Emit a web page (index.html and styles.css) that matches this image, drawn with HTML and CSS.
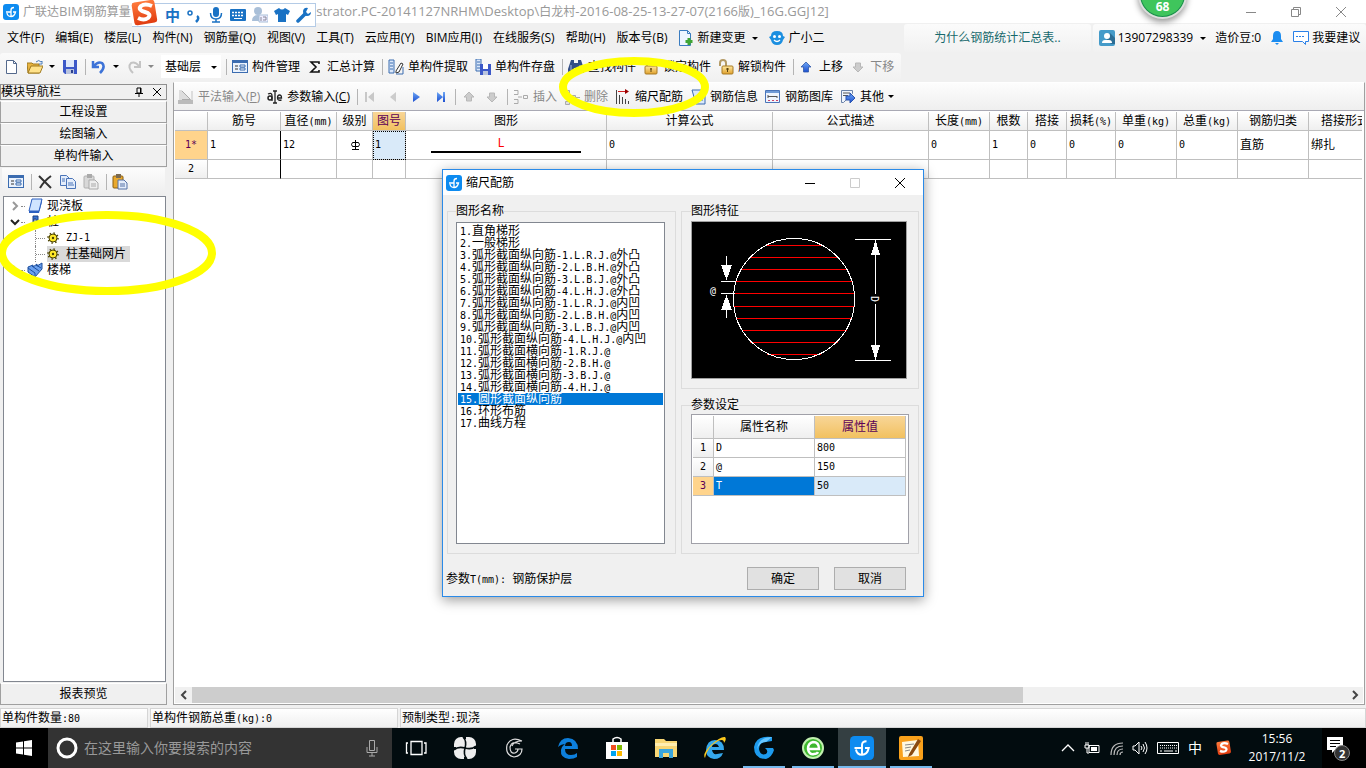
FILE: index.html
```html
<!DOCTYPE html>
<html lang="zh-CN">
<head>
<meta charset="utf-8">
<title>广联达BIM钢筋算量</title>
<link rel="stylesheet" href="styles.css">
</head>
<body>
<svg class="defs" width="0" height="0" aria-hidden="true">
  <defs>
    <linearGradient id="gb" x1="0" y1="0" x2="0" y2="1"><stop offset="0" stop-color="#6fa8f5"/><stop offset="1" stop-color="#1c4fd0"/></linearGradient>
    <linearGradient id="gy" x1="0" y1="0" x2="0" y2="1"><stop offset="0" stop-color="#ffe9a0"/><stop offset="1" stop-color="#e0a02c"/></linearGradient>
    <linearGradient id="gr" x1="0" y1="0" x2="0" y2="1"><stop offset="0" stop-color="#ff7a3c"/><stop offset="1" stop-color="#e03c10"/></linearGradient>
    <symbol id="app" viewBox="0 0 16 16"><rect width="16" height="16" rx="3" fill="#0d8bf0"/><path d="M8 12V6q0-2.500 3-2.500M3 8h5M4 9q.5 3.500 4 3.500t4.500-4.500H10" fill="none" stroke="#fff" stroke-width="1.300"/></symbol>
    <symbol id="sogou" viewBox="0 0 28 28"><rect x="2" y="2" width="23" height="23" rx="3" fill="url(#gr)" transform="rotate(-9 14 14)"/><path d="M21 7q-7-3-11 0c-3 3 0 5 4 6s6 3 3 6q-4 3-10 0" fill="none" stroke="#fff" stroke-width="4"/></symbol>
    <symbol id="form" viewBox="0 0 16 16"><rect x=".5" y="1.500" width="15" height="12" fill="#eaf2fd" stroke="#3b6cb0"/><path d="M1 3h14" stroke="#3b6cb0" stroke-width="2"/><path d="M3 7h3M3 10h3" stroke="#333"/><path d="M8 6h5v2H8zM8 9h5v2H8z" fill="#fff" stroke="#3b6cb0"/></symbol>
    <symbol id="floppy" viewBox="0 0 16 16"><path d="M1 1h14v14H3l-2-2z" fill="#3c58c8"/><path d="M4 1h8v7H4z" fill="#dfe8fa"/><path d="M4 10h8v5H4z" fill="#b9c4de"/><path d="M9 11h2v3H9z" fill="#2c3f8c"/></symbol>
    <symbol id="paste" viewBox="0 0 16 16"><rect x="1" y="2" width="10" height="12" rx="1" fill="#e9a92e" stroke="#8b5f10"/><rect x="4" y="0" width="5" height="4" fill="#7a6a50"/><path d="M6 6h6l3 3v6H6z" fill="#e4edfb" stroke="#5571a5"/><path d="M8 10h5M8 12h5" stroke="#5571a5"/></symbol>
    <symbol id="pasteg" viewBox="0 0 16 16"><rect x="1" y="2" width="10" height="12" rx="1" fill="#d8d8d8" stroke="#b0b0b0"/><rect x="4" y="0" width="5" height="4" fill="#aaa"/><path d="M6 6h6l3 3v6H6z" fill="#eee" stroke="#aaa"/><path d="M8 10h5M8 12h5" stroke="#aaa"/></symbol>
    <symbol id="lock" viewBox="0 0 16 16"><path d="M4 8V5q0-3 4-3t4 3v3" fill="none" stroke="#9a8f7a" stroke-width="2"/><rect x="2" y="7" width="12" height="8" rx="1" fill="url(#gy)" stroke="#a87b25"/><path d="M8 9v4M7 10h2" stroke="#5b430f"/></symbol>
    <symbol id="unlock" viewBox="0 0 16 16"><path d="M2 7V4q0-3 3-3t3 3v3" fill="none" stroke="#b49b66" stroke-width="2"/><rect x="4" y="7" width="11" height="8" rx="1" fill="url(#gy)" stroke="#a87b25"/><path d="M9.500 9v4M8 10h3" stroke="#5b430f"/></symbol>
    <symbol id="up" viewBox="0 0 16 16"><path d="M7 3l5 5H9.500v5h-5V8H2z" fill="url(#gb)" stroke="#3058a8" stroke-width=".8"/></symbol>
    <symbol id="upg" viewBox="0 0 16 16"><path d="M8 3l5 5h-2.500v4h-5V8H3z" fill="#ccc" stroke="#b8b8b8"/></symbol>
    <symbol id="downg" viewBox="0 0 16 16"><path d="M8 13l5-5h-2.500V4h-5v4H3z" fill="#ccc" stroke="#b8b8b8"/></symbol>
    <symbol id="gear" viewBox="0 0 12 12"><circle cx="6" cy="6" r="4" fill="#ffe92a" stroke="#4a4200"/><circle cx="6" cy="6" r="5" fill="none" stroke="#4a4200" stroke-width="1.500" stroke-dasharray="1.500 2.400"/><circle cx="6" cy="6" r="1.200" fill="#4a4200"/></symbol>
  </defs>
</svg>

<header class="titlebar">
  <svg class="i16"><use href="#app"/></svg>
  <span class="t1">广联达<span class="lat">BIM</span>钢筋算量</span>
  <span class="t2"><span class="lat">istrator.PC-20141127NRHM\Desktop\</span>白龙村<span class="lat">-2016-08-25-13-27-07(2166</span>版<span class="lat">)_16G.GGJ12]</span></span>
  <div class="wincontrols">
    <button aria-label="最小化"><svg viewBox="0 0 12 12"><path d="M1 6.500h10"/></svg></button>
    <button aria-label="还原"><svg viewBox="0 0 12 12"><path d="M1.500 3.500h7v7h-7zM3.500 3V1.500h7v7H9"/></svg></button>
    <button aria-label="关闭"><svg viewBox="0 0 12 12"><path d="M1 1l10 10M11 1L1 11"/></svg></button>
  </div>
</header>

<nav class="menubar">
  <button>文件(F)</button><button>编辑(E)</button><button>楼层(L)</button><button>构件(N)</button><button>钢筋量(Q)</button><button>视图(V)</button><button>工具(T)</button><button>云应用(Y)</button><button>BIM应用(I)</button><button>在线服务(S)</button><button>帮助(H)</button><button>版本号(B)</button>
  <button class="ic"><svg class="i16" viewBox="0 0 16 16"><path d="M1.500.500h8l3 3v12h-11z" fill="#eef6ff" stroke="#3a7cc0"/><path d="M9.500.500v3h3" fill="none" stroke="#3a7cc0"/><path d="M11 8v7M7.500 11.500h7" stroke="#3fa535" stroke-width="3"/></svg>新建变更<i class="caret"></i></button>
  <button class="ic"><svg class="i16" viewBox="0 0 16 16"><path d="M8 1q6 0 6 5l2 1-2 3q-1 5-6 5t-6-5L0 7l2-1q0-5 6-5z" fill="#1c8fe0"/><circle cx="5.500" cy="6.500" r="1.500" fill="#fff"/><circle cx="10.500" cy="6.500" r="1.500" fill="#fff"/><path d="M5 10q3 3 6 0" fill="none" stroke="#fff" stroke-width="1.300"/></svg>广小二</button>
  <div class="tip"><a href="#">为什么钢筋统计汇总表..</a></div>
  <div class="user">
    <button class="ic"><svg class="i16" viewBox="0 0 16 16"><rect width="16" height="16" rx="2" fill="#459bc9"/><path d="M8 10l4 4h4V8l-5-5z" fill="#2c6e96"/><circle cx="8" cy="6" r="3" fill="#fff"/><path d="M3 13q0-3 3-3h4q3 0 3 3z" fill="#fff"/></svg>13907298339<i class="caret"></i></button>
    <span>造价豆:0</span>
    <button class="ic" aria-label="通知"><svg class="i14" viewBox="0 0 14 16"><path d="M7 1q4 0 4 5v3l2 3H1l2-3V6q0-5 4-5z" fill="#1b8cf0"/><path d="M5 13h4l-2 2z" fill="#1b8cf0"/></svg></button>
    <button class="ic"><svg class="i16" viewBox="0 0 16 16"><path d="M.500 1.500h15v10h-3v3l-3-3h-9z" fill="#fff" stroke="#2a80e8"/><path d="M3 6.500h2m1 0h2m1 0h2" stroke="#2a80e8"/></svg>我要建议</button>
  </div>
</nav>

<div class="toolbar">
  <div class="strip">
    <button class="tb" aria-label="新建"><svg class="i16" viewBox="0 0 16 16"><path d="M2.500 1.500h7l3 3v10h-10z" fill="#fff" stroke="#54698c"/><path d="M9.500 1.500v3h3" fill="none" stroke="#54698c"/></svg></button>
    <button class="tb" aria-label="打开"><svg class="i16" viewBox="0 0 16 16"><path d="M0 4h5l1 1h6v9H1z" fill="#e8b440" stroke="#a07a20"/><path d="M1 14l3-7h12l-3 7z" fill="#ffe28a" stroke="#a07a20"/><path d="M9 3q3-3 5 0l1-1v3h-3" fill="none" stroke="#4a7cba"/></svg><i class="caret"></i></button>
    <button class="tb" aria-label="保存"><svg class="i16"><use href="#floppy"/></svg></button>
    <i class="sep"></i>
    <button class="tb" aria-label="撤销"><svg class="i16" viewBox="0 0 16 16"><path d="M2 2v6h6M3 7q4-5 8-3 4 4-2 10" fill="none" stroke="#3d73d8" stroke-width="2.500"/></svg><i class="caret"></i></button>
    <button class="tb off" aria-label="重做"><svg class="i16" viewBox="0 0 16 16"><path d="M14 2v6H8M13 7Q9 2 5 4q-4 4 2 10" fill="none" stroke="#c4c4c4" stroke-width="2"/></svg><i class="caret"></i></button>
    <div class="picker"><select class="floor" aria-label="楼层"><option>基础层</option></select><i class="caret"></i></div>
    <i class="sep"></i>
    <button class="tb"><svg class="i16"><use href="#form"/></svg>构件管理</button>
    <button class="tb"><svg class="i16" viewBox="0 0 16 16"><path d="M12 5V3H4l5 5-5 5h8v-2" fill="none" stroke="#111" stroke-width="1.600"/></svg>汇总计算</button>
    <i class="sep"></i>
    <button class="tb"><svg class="i16" viewBox="0 0 16 16"><path d="M1 1h5v13H1z" fill="#dbe8fa" stroke="#3b6cb0"/><path d="M2 4h3M2 7h3M2 10h3" stroke="#3b6cb0"/><path d="M8 12l5-8 2 1-4 8-3 1z" fill="#fff" stroke="#333"/><path d="M8 15h7V8" fill="none" stroke="#3b6cb0"/></svg>单构件提取</button>
    <button class="tb"><svg class="i16" viewBox="0 0 16 16"><path d="M1 0h5v12H1z" fill="#dbe8fa" stroke="#3b6cb0"/><path d="M2 3h3M2 6h3M2 9h3" stroke="#3b6cb0"/><path d="M5 5h11v11H5z" fill="#3c58c8"/><path d="M8 5h5v5H8z" fill="#fff"/><path d="M8 12h5v4H8z" fill="#b9c4de"/></svg>单构件存盘</button>
    <i class="sep"></i>
    <button class="tb"><svg class="i16" viewBox="0 0 16 16"><path d="M3 1h3v3h4V1h3l3 9v4h-6v-5H6v5H0v-4z" fill="#344f86"/><path d="M3 6v5M12 6v5" stroke="#a5bce8"/></svg>查找构件</button>
    <button class="tb"><svg class="i16"><use href="#lock"/></svg>锁定构件</button>
    <button class="tb"><svg class="i16"><use href="#unlock"/></svg>解锁构件</button>
    <i class="sep"></i>
    <button class="tb"><svg class="i16"><use href="#up"/></svg>上移</button>
    <button class="tb off"><svg class="i16"><use href="#downg"/></svg>下移</button>
  </div>
</div>

<div class="work">
  <aside class="side">
    <div class="sidehead"><span>模块导航栏</span>
      <button aria-label="固定"><svg viewBox="0 0 10 10"><path d="M3 1h4v5H3zM1 6.500h8M5 6v4M6.500 1v5" fill="none" stroke="#000"/></svg></button>
      <button aria-label="关闭"><svg viewBox="0 0 10 10"><path d="M1 1l8 8M9 1L1 9" stroke="#000"/></svg></button>
    </div>
    <button class="navbtn">工程设置</button>
    <button class="navbtn">绘图输入</button>
    <button class="navbtn">单构件输入</button>
    <div class="sidetools">
      <button class="tb" aria-label="属性"><svg class="i16"><use href="#form"/></svg></button><i class="sep"></i>
      <button class="tb" aria-label="删除"><svg class="i16" viewBox="0 0 16 16"><path d="M2 2q6 6 12 12M14 2Q7 7 3 14" fill="none" stroke="#333" stroke-width="2"/></svg></button>
      <button class="tb" aria-label="复制"><svg class="i16" viewBox="0 0 16 16"><path d="M.500 1.500h6l3 3v7h-9z" fill="#e4edfb" stroke="#4a74b8"/><path d="M6.500 4.500h6l3 3v7h-9z" fill="#e4edfb" stroke="#4a74b8"/><path d="M8 9h5M8 11h6M2 5h3M2 7h3" stroke="#4a74b8"/></svg></button>
      <button class="tb" aria-label="粘贴"><svg class="i16"><use href="#pasteg"/></svg></button><i class="sep"></i>
      <button class="tb" aria-label="粘贴构件"><svg class="i16"><use href="#paste"/></svg></button>
    </div>
    <ul class="tree">
      <li><svg class="exp" viewBox="0 0 10 10"><path d="M3 1l4 4-4 4" stroke="#999"/></svg><i class="dot"></i><svg class="i16" viewBox="0 0 16 16"><path d="M5 1h10l-3 12H2z" fill="#cfe4ff" stroke="#2b5fc0"/><path d="M2 13h10v2H2zM12 13l3-12v3l-3 11z" fill="#2b5fc0"/></svg><span>现浇板</span></li>
      <li><svg class="exp" viewBox="0 0 10 10"><path d="M1 3l4 4 4-4" stroke="#222"/></svg><i class="dot"></i><svg class="i16" viewBox="0 0 16 16"><path d="M6 2h5v9H9V5H7v9H3v-3h3z" fill="#3673d0" stroke="#1d3f80"/></svg><span>桩</span>
        <ul>
          <li><i class="branch"></i><b class="leaf"><svg class="i12"><use href="#gear"/></svg><span class="m">ZJ-1</span></b></li>
          <li><i class="branch"></i><b class="leaf sel"><svg class="i12"><use href="#gear"/></svg><span>柱基础网片</span></b></li>
        </ul>
      </li>
      <li><svg class="exp" viewBox="0 0 10 10"><path d="M3 1l4 4-4 4" stroke="#999"/></svg><i class="dot"></i><svg class="i16" viewBox="0 0 16 16"><path d="M1 5l5-2v2l4-3v2l5-3v6L8 15 1 10z" fill="#6aa0ee" stroke="#1d4f9e"/><path d="M1 6l7 5M5 4l7 5M9 3l5 3M8 11v4" stroke="#1d4f9e"/></svg><span>楼梯</span></li>
    </ul>
    <button class="navbtn">报表预览</button>
  </aside>

  <main class="main">
    <div class="maintools">
      <button class="tb off"><svg class="i16" viewBox="0 0 16 16"><path d="M3.500 1.500l9 9h-9z" fill="#ddd" stroke="#aaa"/><path d="M1 1h3v11H1zM13 2h2v10h-2z" fill="#ddd"/><path d="M0 11h15v4H0z" fill="#bbb"/></svg><span>平法输入(<u>P</u>)</span></button>
      <button class="tb"><svg class="i16" viewBox="0 0 16 16"><circle cx="3" cy="9" r="2" fill="none" stroke="#222" stroke-width="1.500"/><path d="M1 5q4-2 4 2v5M10.500 9h4q0-3-2-3t-2 3 4 2M6 2h4M6 14h4M8 2v12" fill="none" stroke="#222" stroke-width="1.300"/></svg><span>参数输入(<u>C</u>)</span></button>
      <i class="sep"></i>
      <button class="tb" aria-label="首条"><svg class="i16" viewBox="0 0 16 16"><path d="M2 3h2v10H2zM11 3v10L5 8z" fill="#c8c8c8"/></svg></button>
      <button class="tb" aria-label="上一条"><svg class="i16" viewBox="0 0 16 16"><path d="M10 3v10L4 8z" fill="#ccc"/></svg></button>
      <button class="tb" aria-label="下一条"><svg class="i16" viewBox="0 0 16 16"><path d="M4 3v10l7-5z" fill="url(#gb)"/></svg></button>
      <button class="tb" aria-label="末条"><svg class="i16" viewBox="0 0 16 16"><path d="M5 3v10l6-5zM11 3h2v10h-2z" fill="url(#gb)"/></svg></button>
      <i class="sep"></i>
      <button class="tb" aria-label="上移"><svg class="i16"><use href="#upg"/></svg></button>
      <button class="tb" aria-label="下移"><svg class="i16"><use href="#downg"/></svg></button>
      <i class="sep"></i>
      <button class="tb off"><svg class="i16" viewBox="0 0 16 16"><path d="M1 1.500h4v4H1M1 10.500h4v4H1M5 8h4M10.500 6.500h4v3h-4z" fill="none" stroke="#aaa"/></svg>插入</button>
      <button class="tb off"><svg class="i16" viewBox="0 0 16 16"><path d="M1.500 1.500h4v3h-4zM5.500 6.500h6v4h-6zM1.500 12.500h4v3h-4zM12 8.500h4" fill="#ddd" stroke="#aaa"/></svg>删除</button>
      <button class="tb"><svg class="i16" viewBox="0 0 16 16"><path d="M1.500 1v14M4.500 6v9M7.500 8v7M10.500 10v5M13.500 12v3" stroke="#444"/><path d="M3 2.500h8" stroke="#d02020"/><path d="M10 0l4 2.500L10 5z" fill="#900"/></svg>缩尺配筋</button>
      <button class="tb"><svg class="i16" viewBox="0 0 16 16"><path d="M2 1h10l3 4v10H6z" fill="#dbe8fa" stroke="#3b6cb0"/><path d="M7 8h6M7 11h6" stroke="#3b6cb0"/></svg>钢筋信息</button>
      <button class="tb"><svg class="i16" viewBox="0 0 16 16"><path d="M.500 1.500h14v12H.500z" fill="#eef4fd" stroke="#4a74b8"/><path d="M1 3h13" stroke="#6f9ad6" stroke-width="2"/><path d="M3 6v3M3 7.500h9M12 7v2" fill="none" stroke="#555"/><path d="M3 11.500h2m2 0h2m2 0h2" stroke="#c46"/></svg>钢筋图库</button>
      <button class="tb"><svg class="i16" viewBox="0 0 16 16"><path d="M1.500 1.500h11v3l-9 9h-2z" fill="#eef4fd" stroke="#6a82a8"/><path d="M3 4h7M3 6.500h5" stroke="#555"/><path d="M6 7h4V4l5 5-5 5v-3H6z" fill="url(#gb)" stroke="#2b55b0"/></svg>其他<i class="caret"></i></button>
    </div>
    <div class="gridwrap">
      <table class="grid">
        <colgroup><col class="c33"><col class="c73"><col class="c56"><col class="c36"><col class="c33"><col class="c201"><col class="c166"><col class="c156"><col class="c61"><col class="c38"><col class="c39"><col class="c49"><col class="c61"><col class="c61"><col class="c71"><col class="c73"></colgroup>
        <thead><tr><th></th><th>筋号</th><th>直径<span class="m">(mm)</span></th><th>级别</th><th class="hot">图号</th><th>图形</th><th>计算公式</th><th>公式描述</th><th>长度<span class="m">(mm)</span></th><th>根数</th><th>搭接</th><th>损耗<span class="m">(%)</span></th><th>单重<span class="m">(kg)</span></th><th>总重<span class="m">(kg)</span></th><th>钢筋归类</th><th>搭接形式</th></tr></thead>
        <tbody>
          <tr class="r1"><th class="cur m">1*</th><td class="m frozen">1</td><td class="m">12</td><td class="mid"><svg class="i12" viewBox="0 0 12 12"><path d="M6.500 1v10M3 10.500h7M3.500 3.500h6l1 2-1 2h-6l-1-2z" fill="none" stroke="#000"/></svg></td><td class="m focus">1</td><td class="shape"><span>L</span></td><td class="m">0</td><td></td><td class="m">0</td><td class="m">1</td><td class="m">0</td><td class="m">0</td><td class="m">0</td><td class="m">0</td><td>直筋</td><td>绑扎</td></tr>
          <tr class="r2"><th class="m">2</th><td class="frozen"></td><td></td><td></td><td></td><td></td><td></td><td></td><td></td><td></td><td></td><td></td><td></td><td></td><td></td><td></td></tr>
        </tbody>
      </table>
    </div>
    <div class="hscroll">
      <button aria-label="向左"><svg viewBox="0 0 10 10"><path d="M7 1L3 5l4 4"/></svg></button>
      <div class="track"><div class="thumb"></div></div>
      <button aria-label="向右"><svg viewBox="0 0 10 10"><path d="M3 1l4 4-4 4"/></svg></button>
    </div>
  </main>
</div>

<footer class="status">
  <div class="s1">单构件数量<span class="m">:80</span></div>
  <div class="s2">单构件钢筋总重<span class="m">(kg):0</span></div>
  <div class="s3">预制类型<span class="m">:</span>现浇</div>
</footer>

<div class="taskbar">
  <button class="start" aria-label="开始"><svg viewBox="0 0 16 16"><path d="M0 2.500l7-1v6H0zM8 1.300L16 0v7.500H8zM0 8.500h7v6l-7-1zM8 8.500h8V16l-8-1.300z" fill="#fff"/></svg></button>
  <label class="search"><svg class="ring" viewBox="0 0 22 22"><circle cx="11" cy="11" r="9" fill="none" stroke="#fff" stroke-width="3"/></svg><input type="text" placeholder="在这里输入你要搜索的内容" aria-label="搜索"><svg class="mic" viewBox="0 0 12 18"><path d="M3.500 1.500h5v10h-5zM1 8v5.500h10V8M6 14v3M3 17h6" fill="none" stroke="#aaa"/></svg></label>
  <div class="apps">
    <button aria-label="任务视图"><svg viewBox="0 0 24 24"><path d="M7 5.500h11v13H7zM4 7H2.500v10H4M20 7h2v10h-2" fill="none" stroke="#fff" stroke-width="1.300"/></svg></button>
    <button aria-label="风扇"><svg viewBox="0 0 24 24"><rect x="1" y="1" width="22" height="22" rx="7" fill="#eee"/><path d="M12 12Q14 5 10 1M12 12q7 2 11-2M12 12q-2 7 2 11M12 12Q5 10 1 14" fill="none" stroke="#020c0f" stroke-width="1.600"/><path d="M12 0v3M24 12h-3M12 24v-3M0 12h3" stroke="#020c0f" stroke-width="2"/></svg></button>
    <button aria-label="漩涡"><svg viewBox="0 0 24 24"><path d="M20 5Q9 0 5 9q-2 10 7 12 8-1 8-8h-7M18 8Q10 4 8 11q0 7 5 6 3-1 3-4M20 5q-8 0-10 5" fill="none" stroke="#ddd" stroke-width="1.200"/></svg></button>
    <button class="edge" aria-label="Edge"><svg viewBox="0 0 24 24"><path d="M2 11Q4 2 12 2q10 1 10 11H9q0 6 6 6 4 0 6-2v4q-3 2-8 2Q4 22 5 14q1-5 5-6-5 0-8 3zm7-1h7q0-4-3-4-4 0-4 4z" fill="#0d7fdc"/></svg></button>
    <button aria-label="应用商店"><svg viewBox="0 0 24 24"><path d="M8 7V3q4-3 8 0v4" fill="none" stroke="#fff" stroke-width="1.500"/><path d="M1 6h22v17H1z" fill="#fff"/><path d="M6 9h5v5H6z" fill="#f25022"/><path d="M12 9h5v5h-5z" fill="#7fba00"/><path d="M6 15h5v5H6z" fill="#00a4ef"/><path d="M12 15h5v5h-5z" fill="#ffb900"/></svg></button>
    <button aria-label="文件资源管理器"><svg viewBox="0 0 24 24"><path d="M1 3h9l2 2h11v16H1z" fill="#f8d775"/><path d="M1 7h22v3H1z" fill="#ffeeb0"/><path d="M5 13h14v9h-4v-5H9v5H5z" fill="#3aa5dc"/></svg></button>
    <button aria-label="Internet Explorer"><svg viewBox="0 0 24 24"><path d="M12 4q9 0 9 10H9q1 5 5 4l6-1q-2 6-9 6-8-1-8-9 1-10 9-10zM9 11h7q-1-3-3-3-4 0-4 3z" fill="#35a8ec"/><path d="M2 22Q-1 18 8 9q10-9 14-8 2 2-1 6 0-5-6-2Q4 11 2 22z" fill="#fbc81c"/></svg></button>
    <button class="run" aria-label="浏览器"><svg viewBox="0 0 24 24"><path d="M20 1Q4-1 2 11q0 12 12 12 6-2 8-9l-1-2h-8q4 3 1 6-6 2-7-5 0-7 7-7l6-1z" fill="#1d9bee"/><path d="M20 1q-14 0-15 13Q7 6 14 6z" fill="#66c6ff"/></svg></button>
    <button class="run" aria-label="安全浏览器"><svg viewBox="0 0 24 24"><circle cx="12" cy="12" r="10" fill="#3eb82e" stroke="#c2f0b0" stroke-width="2"/><path d="M7 13h11q0-7-6-7-5 1-5 7 1 6 6 5 3 0 4-2" fill="none" stroke="#fff" stroke-width="2.500"/></svg></button>
    <button class="run on" aria-label="广联达"><svg><use href="#app"/></svg></button>
    <button class="run" aria-label="记事本"><svg viewBox="0 0 24 24"><rect width="24" height="24" rx="2" fill="#f9a11b"/><path d="M3 6l16-2 1 16-16 1z" fill="#fff8e0"/><path d="M6 9l9-1M6 12l6-1M6 15l5-1" stroke="#888"/><path d="M10 18l9-15 3 2-9 14-4 2z" fill="#8a4a10"/></svg></button>
  </div>
  <div class="tray">
    <svg viewBox="0 0 16 16"><path d="M2 11l6-6 6 6" fill="none" stroke="#fff" stroke-width="1.300"/></svg>
    <svg viewBox="0 0 16 16"><path d="M5 5.500h10v7H5zM2 2v3M4 2v3M1 5h4v3H1zM3 8v5h2" fill="none" stroke="#fff"/><path d="M7 7h6v4H7z" fill="#fff"/></svg>
    <svg viewBox="0 0 16 16"><path d="M3 15Q3 3 15 3M6 15q0-9 9-9M9 15q0-6 6-6M12 15q0-3 3-3" fill="none" stroke="#bbb" stroke-width="1.200"/></svg>
    <svg viewBox="0 0 16 16"><path d="M1 6h2l4-4v12l-4-4H1zM9 6q2 2 0 4M11 4q3 4 0 8M13 2q4 6 0 12" fill="none" stroke="#fff"/></svg>
    <svg class="kb" viewBox="0 0 24 16"><path d="M1.500 2.500h21v11h-21z" fill="none" stroke="#fff"/><path d="M4 5.500h17M4 8h17" stroke="#fff" stroke-dasharray="1 1"/><path d="M4 11h2m2 0h9m2 0h2" stroke="#fff"/></svg>
    <span class="ime">中</span>
    <svg><use href="#sogou"/></svg>
  </div>
  <div class="clock"><span>15:56</span><span>2017/11/2</span></div>
  <button class="note" aria-label="通知中心"><svg viewBox="0 0 24 26"><path d="M1 2h16v13H9l-3 3v-3H1z" fill="#fff"/><path d="M4 5.500h10M4 8.500h10M4 11.500h6" stroke="#000"/><circle cx="16" cy="18" r="7.500" fill="#333" stroke="#888"/></svg><b>2</b></button>
</div>

<div class="imebar">
  <svg class="logo"><use href="#sogou"/></svg>
  <b>中</b>
  <svg viewBox="0 0 16 16"><circle cx="4" cy="6" r="2" fill="none" stroke="#1a72c4" stroke-width="1.500"/><path d="M11 9q3 2-1 6" fill="none" stroke="#1a72c4" stroke-width="2.500"/></svg>
  <svg viewBox="0 0 16 16"><rect x="5" y="0" width="6" height="10" rx="3" fill="#1a72c4"/><path d="M2.500 6q0 6 5.500 6t5.500-6M8 12v3M4 15h8" fill="none" stroke="#1a72c4" stroke-width="1.500"/></svg>
  <svg viewBox="0 0 16 16"><rect x="0" y="2" width="16" height="12" rx="1" fill="#1a72c4"/><path d="M2 5.500h12M2 8.500h12" stroke="#fff" stroke-dasharray="2 1" stroke-width="1.500"/><path d="M4 11.500h8" stroke="#fff"/></svg>
  <svg viewBox="0 0 16 16"><circle cx="6" cy="4" r="4" fill="#a9bfd8"/><path d="M0 14q0-6 6-6t6 6z" fill="#a9bfd8"/><path d="M7 8h9v7H7z" fill="#eef" stroke="#a9bfd8"/><path d="M9 10v4M11 10h3v3h-3" fill="none" stroke="#889"/></svg>
  <svg viewBox="0 0 16 16"><path d="M5 1q3 3 6 0l5 3-2 4-2-1v8H4V7L2 8 0 4z" fill="#1a72c4"/></svg>
  <svg viewBox="0 0 16 16"><path d="M2 14l7-7" stroke="#1a72c4" stroke-width="3.500" stroke-linecap="round"/><path d="M12 1Q8 0 7 4q0 5 4 5 4 0 4-4l-3 2-2-2z" fill="#1a72c4"/></svg>
</div>
<div class="ball">68</div>

<section class="dialog" role="dialog" aria-label="缩尺配筋">
  <div class="dtitle"><svg class="i16"><use href="#app"/></svg><span>缩尺配筋</span>
    <button aria-label="最小化"><svg viewBox="0 0 12 12"><path d="M1 6.500h10" stroke="#000"/></svg></button>
    <button aria-label="最大化" disabled><svg viewBox="0 0 12 12"><path d="M1.500 1.500h9v9h-9z" stroke="#ccc"/></svg></button>
    <button aria-label="关闭"><svg viewBox="0 0 12 12"><path d="M1 1l10 10M11 1L1 11" stroke="#000"/></svg></button>
  </div>
  <div class="dbody">
    <fieldset class="names"><legend>图形名称</legend>
      <ul class="list" role="listbox" aria-label="图形名称">
        <li role="option"><span class="m">1.</span>直角梯形</li>
        <li role="option"><span class="m">2.</span>一般梯形</li>
        <li role="option"><span class="m">3.</span>弧形截面纵向筋<span class="m">-1.L.R.J.@</span>外凸</li>
        <li role="option"><span class="m">4.</span>弧形截面纵向筋<span class="m">-2.L.B.H.@</span>外凸</li>
        <li role="option"><span class="m">5.</span>弧形截面纵向筋<span class="m">-3.L.B.J.@</span>外凸</li>
        <li role="option"><span class="m">6.</span>弧形截面纵向筋<span class="m">-4.L.H.J.@</span>外凸</li>
        <li role="option"><span class="m">7.</span>弧形截面纵向筋<span class="m">-1.L.R.J.@</span>内凹</li>
        <li role="option"><span class="m">8.</span>弧形截面纵向筋<span class="m">-2.L.B.H.@</span>内凹</li>
        <li role="option"><span class="m">9.</span>弧形截面纵向筋<span class="m">-3.L.B.J.@</span>内凹</li>
        <li role="option"><span class="m">10.</span>弧形截面纵向筋<span class="m">-4.L.H.J.@</span>内凹</li>
        <li role="option"><span class="m">11.</span>弧形截面横向筋<span class="m">-1.R.J.@</span></li>
        <li role="option"><span class="m">12.</span>弧形截面横向筋<span class="m">-2.B.H.@</span></li>
        <li role="option"><span class="m">13.</span>弧形截面横向筋<span class="m">-3.B.J.@</span></li>
        <li role="option"><span class="m">14.</span>弧形截面横向筋<span class="m">-4.H.J.@</span></li>
        <li class="picked" role="option" aria-selected="true"><span class="m">15.</span>圆形截面纵向筋</li>
        <li role="option"><span class="m">16.</span>环形布筋</li>
        <li role="option"><span class="m">17.</span>曲线方程</li>
      </ul>
    </fieldset>
    <div class="right">
      <fieldset class="feature"><legend>图形特征</legend>
        <svg class="figure" viewBox="0 0 214 156" shape-rendering="crispEdges">
          <rect width="214" height="156" fill="#000"/>
          <path d="M75 23.500h54M58 35.500h88M49 47.500h106M44 59.500h116M42 71.500h121M42 84.500h121M44 96.500h116M50 108.500h105M58 120.500h88M75 132.500h54" stroke="#f00"/>
          <g stroke="#fff" fill="none"><circle cx="102" cy="77" r="60.500"/><path d="M34.500 34v16M29 59.500h14M29 71.500h14M34.500 80v16M163 17.500h36M163 138.500h36M183.500 18v54M183.500 82v56"/></g>
          <path d="M29 43h11l-5.500 15zM29 88h11l-5.500-15zM179 33h9l-4.500-15zM179 123h9l-4.500 15z" fill="#fff"/>
          <text x="18" y="72">@</text>
          <text transform="translate(179 74) rotate(90)">D</text>
        </svg>
      </fieldset>
      <fieldset class="params"><legend>参数设定</legend>
        <div class="ptable">
          <table class="grid">
            <colgroup><col class="c21"><col class="c101"><col class="c91"></colgroup>
            <thead><tr><th></th><th>属性名称</th><th class="hot">属性值</th></tr></thead>
            <tbody class="m">
              <tr><th>1</th><td>D</td><td>800</td></tr>
              <tr><th>2</th><td>@</td><td>150</td></tr>
              <tr><th class="cur">3</th><td class="blue">T</td><td class="pale">50</td></tr>
            </tbody>
          </table>
        </div>
      </fieldset>
    </div>
  </div>
  <div class="dfoot"><span>参数<span class="m">T(mm): </span>钢筋保护层</span><button>确定</button><button>取消</button></div>
</section>

<svg class="mark mark-a" viewBox="0 0 152 62"><ellipse cx="76" cy="31" rx="71" ry="26"/></svg>
<svg class="mark mark-b" viewBox="0 0 220 84"><ellipse cx="109" cy="42" rx="105" ry="38"/></svg>
</body>
</html>
```
FILE: styles.css
```css
* { box-sizing: border-box; }
body {
  margin: 0;
  height: 100vh;
  display: flex;
  flex-direction: column;
  background: #f0f0f0;
  color: #000;
  font: 12px/16px "Open Sans", "Noto Sans CJK SC", sans-serif;
  overflow: hidden;
  position: relative;
}
button, input, select { font: inherit; color: inherit; }
button { border: 0; background: none; padding: 0; white-space: nowrap; }
ul { list-style: none; margin: 0; padding: 0; }
svg { display: block; flex: none; }
.defs { position: absolute; }
.i16 { width: 16px; height: 16px; }
.i14 { width: 14px; height: 16px; }
.i12 { width: 12px; height: 12px; }
.m { font-family: "DejaVu Sans Mono", monospace; font-size: 10px; }
.lat { font-size: 13px; }
.caret { border: 3px solid transparent; border-top-color: #000; border-bottom: 0; }
.sep { width: 1px; height: 16px; background: #b4b4b4; margin-right: 5px; flex: none; }

.titlebar { height: 23px; display: flex; align-items: center; background: #fff; color: #999; padding-left: 3px; flex: none; white-space: nowrap; }
.t1 { margin-left: 4px; width: 290px; }
.wincontrols { margin: 0 3px 0 auto; display: flex; }
.wincontrols button { width: 45px; display: flex; justify-content: center; }
.wincontrols svg { width: 12px; height: 12px; fill: none; stroke: #888; }

.menubar { height: 30px; display: flex; align-items: center; gap: 11px; padding-left: 7px; flex: none; white-space: nowrap; }
.ic { display: flex; align-items: center; gap: 3px; }
.ic .caret { margin-left: 4px; }
.tip, .user { align-self: stretch; margin: 1px 0; display: flex; align-items: center; justify-content: center; background: linear-gradient(#fbfbfb, #f1f1f1); border-radius: 3px; }
.tip { margin-left: auto; width: 187px; }
.tip a { color: #17696c; text-decoration: none; }
.user { margin-left: -9px; width: 273px; gap: 9px; }

.toolbar { height: 29px; flex: none; display: flex; }
.strip { display: flex; align-items: center; background: linear-gradient(#fafafa, #f1f1f1); padding-left: 4px; border-radius: 3px; margin-bottom: 2px; }
.tb { display: flex; align-items: center; gap: 4px; margin-right: 7px; }
.strip .tb .caret { margin-left: 2px; }
.off { color: #888; }
.off .caret { border-top-color: #888; }
.picker { position: relative; width: 60px; margin-right: 5px; }
.picker .caret { position: absolute; right: 4px; top: 11px; pointer-events: none; }
.floor { display: block; appearance: none; width: 100%; height: 23px; border: 0; border-radius: 0; padding: 0 4px; background: #fff; }

.work { flex: 1; min-height: 0; display: flex; gap: 6px; }
.side { width: 167px; flex: none; display: flex; flex-direction: column; padding: 2px 0 3px 0; font-family: "Liberation Serif", "Noto Sans CJK SC", serif; }
.sidehead { height: 16px; margin-bottom: 1px; border: 1px solid #909090; display: flex; align-items: center; gap: 8px; padding-right: 4px; flex: none; }
.sidehead span { margin-right: auto; }
.sidehead svg { width: 10px; height: 10px; fill: none; }
.navbtn { height: 22px; flex: none; border: 1px solid #a0a0a0; border-top-color: #fff; background: #f0f0f0; }
.sidetools { height: 28px; margin: 1px 2px 0; padding-left: 6px; display: flex; align-items: center; background: linear-gradient(#fcfcfc, #eee); flex: none; }
.tree { flex: 1; margin: 0 1px 1px 3px; background: #fff; border: 1px solid #828790; padding: 1px 0 0 6px; }
.tree > li { display: flex; flex-wrap: wrap; align-items: center; line-height: 16px; }
.tree span { margin-left: 4px; }
.tree ul { width: 100%; padding-left: 25px; }
.tree ul li { display: flex; align-items: center; height: 16px; }
.exp { width: 10px; height: 10px; fill: none; stroke-width: 2; }
.dot { width: 4px; margin: 0 2px 0 1px; border-top: 1px dotted #888; }
.branch { width: 12px; height: 16px; border-left: 1px dotted #888; background: repeating-linear-gradient(90deg, #888 0 1px, transparent 1px 2px) no-repeat 0 8px / 10px 1px; }
.leaf { display: flex; align-items: center; font-weight: normal; padding-right: 4px; }
.leaf span { margin-left: 7px; }
.sel { background: #d9d9d9; }

.main { flex: 1; min-width: 0; display: flex; flex-direction: column; border: 1px solid #a0a0a0; border-top-color: #fff; margin: 0 1px 3px 0; background: #fff; }
.maintools { height: 28px; display: flex; align-items: center; padding-left: 4px; background: linear-gradient(#fdfdfd, #efefef); border-bottom: 1px solid #a9a9b4; flex: none; }
.gridwrap { flex: 1; min-height: 0; overflow: hidden; padding: 1px 0 0 1px; margin-right: 2px; }
.grid { border-collapse: separate; border-spacing: 0; table-layout: fixed; width: 0; }
.grid th, .grid td { border-right: 1px solid #bfbfbf; border-bottom: 1px solid #bfbfbf; padding: 0 2px; font-weight: normal; text-align: left; white-space: nowrap; line-height: 16px; overflow: hidden; }
.grid th { padding: 0; text-align: center; background: linear-gradient(#fff, #efefef); }
.grid .hot { background: linear-gradient(#f8d698, #f2c160); color: #5b0057; }
.grid .cur { background: #ffd48c; color: #5b0057; }
.gridwrap thead th { height: 19px; }
.r1 > * { height: 29px; }
.r2 > * { height: 19px; }
.grid .frozen { border-right-color: #000; }
.grid .mid svg { margin: 0 auto; }
.grid .focus { background: #d9eaf9; outline: 1px dotted #000; outline-offset: -1px; }
.grid .shape { text-align: center; vertical-align: middle; }
.shape span { display: block; width: 150px; margin: 0 auto; border-bottom: 2px solid #000; color: #f00; font: 12px/14px "Liberation Mono", monospace; padding-right: 10px; }
.c21 { width: 21px; } .c33 { width: 33px; } .c36 { width: 36px; } .c38 { width: 38px; } .c39 { width: 39px; }
.c49 { width: 49px; } .c56 { width: 56px; } .c61 { width: 61px; } .c71 { width: 71px; } .c73 { width: 73px; }
.c91 { width: 91px; } .c101 { width: 101px; } .c156 { width: 156px; } .c166 { width: 166px; } .c201 { width: 201px; }
.hscroll { height: 16px; display: flex; background: #f0f0f0; margin: 0 1px 1px; flex: none; }
.hscroll button { width: 17px; display: flex; align-items: center; justify-content: center; }
.hscroll svg { width: 10px; height: 10px; fill: none; stroke: #444; stroke-width: 2; }
.track { flex: 1; }
.thumb { width: 72%; height: 100%; background: #cdcdcd; }

.status { height: 20px; flex: none; display: flex; gap: 2px; }
.status div { border: 1px solid #d5d5d5; background: linear-gradient(#fff, #efefef); padding-left: 1px; line-height: 18px; }
.s1 { width: 148px; }
.s2 { width: 248px; }
.s3 { flex: 1; }

.taskbar { height: 40px; flex: none; display: flex; background: #020c0f; color: #fff; }
.start { width: 48px; background: #000; display: flex; align-items: center; justify-content: center; }
.start svg { width: 16px; height: 16px; }
.search { width: 344px; background: #333; display: flex; align-items: center; padding: 0 14px 0 8px; }
.ring { width: 22px; height: 22px; }
.search input { flex: 1; min-width: 0; background: none; border: 0; outline: 0; padding: 0 6px; font-size: 14px; }
.search input::placeholder { color: #999; opacity: 1; }
.mic { width: 12px; height: 18px; }
.apps { display: flex; gap: 1px; }
.apps button { width: 48px; display: flex; align-items: center; justify-content: center; border-bottom: 2px solid transparent; padding-top: 2px; }
.apps svg { width: 24px; height: 24px; }
.apps .edge { margin-left: 5px; }
.apps .run { border-bottom: 2px solid #76b9ed; width: 42px; margin: 0 3px; }
.apps .run.on { width: 48px; background: #343f42; margin: 0; }
.tray { margin-left: auto; display: flex; align-items: center; gap: 8px; }
.tray svg { width: 16px; height: 16px; }
.tray .kb { width: 24px; }
.ime { font-size: 14px; margin-right: 6px; }
.clock { width: 90px; display: flex; flex-direction: column; align-items: center; justify-content: center; line-height: 18px; }
.note { width: 44px; background: #000; position: relative; display: flex; align-items: center; padding-left: 4px; }
.note svg { width: 24px; height: 26px; }
.note b { position: absolute; left: 17px; top: 18px; font-size: 11px; line-height: 16px; }

.imebar { position: absolute; left: 132px; top: 3px; width: 184px; height: 24px; background: #fff; border: 1px solid #b4cbe6; border-left: 0; display: flex; align-items: center; gap: 6px; color: #1a72c4; }
.imebar svg { width: 16px; height: 16px; }
.imebar .logo { width: 28px; height: 28px; margin: -4px 0 0 -1px; }
.imebar b { font-size: 15px; line-height: 20px; }
.ball { position: absolute; left: 1138px; top: -30px; width: 49px; height: 49px; border: 2px solid #ddd; border-radius: 50%; background: #3fc55c; box-shadow: inset 0 0 0 1px #1c8a50, 0 3px 6px #999; color: #fff; font-weight: bold; text-align: center; padding-top: 27px; line-height: 16px; }

.dialog { position: absolute; left: 442px; top: 169px; width: 482px; height: 428px; border: 1px solid #2a8ae8; background: #f0f0f0; box-shadow: 0 3px 12px rgba(0, 0, 0, .4); display: flex; flex-direction: column; }
.dtitle { height: 25px; background: #fff; display: flex; align-items: center; padding: 0 1px 0 3px; flex: none; }
.dtitle span { margin: 0 auto 0 4px; }
.dtitle button { width: 45px; display: flex; justify-content: center; }
.dtitle svg:not(.i16) { width: 12px; height: 12px; fill: none; }
.dbody { flex: 1; min-height: 0; display: flex; gap: 5px; padding: 10px 4px 0; }
fieldset { margin: 0; border: 1px solid #dcdcdc; min-width: 0; display: flex; flex-direction: column; }
legend { padding: 0; line-height: 12px; height: 12px; }
.names { width: 229px; padding: 5px 10px 9px 8px; }
.names .list { flex: 1; }
.list { background: #fff; border: 1px solid #828790; padding: 2px 1px; }
.list li { height: 12px; line-height: 12px; padding-left: 2px; white-space: nowrap; }
.list .picked { background: #0078d7; color: #fff; }
.right { flex: 1; display: flex; flex-direction: column; gap: 10px; }
.feature { height: 184px; padding: 4px 10px 0 9px; }
.figure { width: 216px; height: 158px; border: 1px solid #a0a0a0; }
.figure text { fill: #fff; font: 10px "DejaVu Sans Mono", monospace; }
.params { flex: 1; padding: 3px 9px 9px 9px; }
.ptable { flex: 1; background: #fff; border: 1px solid #a0a0a8; padding: 1px; }
.ptable thead th { height: 23px; }
.ptable tbody th { height: 19px; }
.grid .blue { background: #0078d7; color: #fff; }
.grid .pale { background: #d9eaf9; }
.dfoot { height: 42px; display: flex; align-items: flex-start; padding: 13px 17px 0 3px; gap: 15px; flex: none; }
.dfoot > span { margin-right: auto; line-height: 23px; white-space: pre; }
.dfoot button { width: 72px; height: 23px; background: #e1e1e1; border: 1px solid #adadad; }

.mark { position: absolute; fill: none; stroke: #ff0; stroke-width: 8; pointer-events: none; }
.mark-a { left: 558px; top: 56px; width: 152px; height: 62px; }
.mark-b { left: -2px; top: 211px; width: 220px; height: 84px; }
```
